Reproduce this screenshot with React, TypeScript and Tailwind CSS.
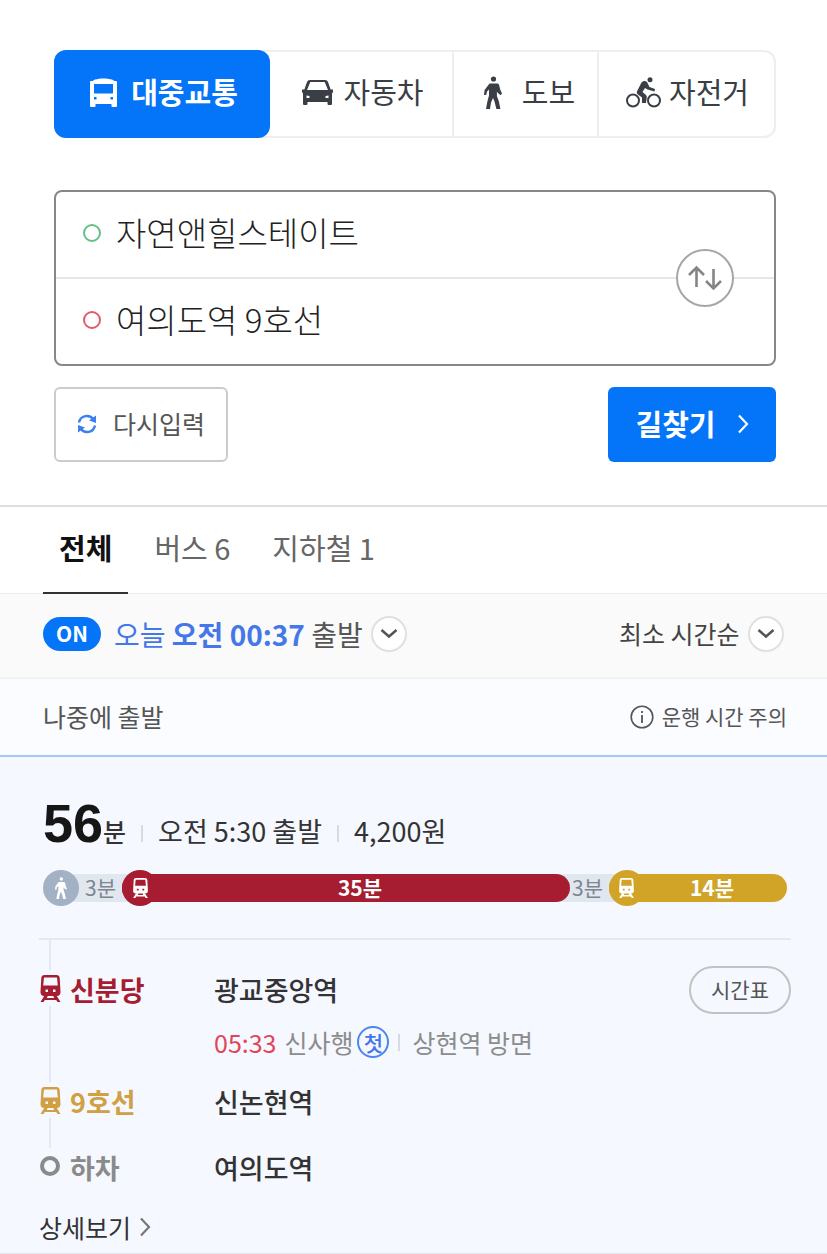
import type { FormEvent, ReactElement, ReactNode } from "react";
import { useState } from "react";

type TravelMode = "transit" | "car" | "walk" | "bike";
type RouteFilter = "all" | "bus" | "subway";

interface ModeOption {
  id: TravelMode;
  label: string;
  icon: ReactNode;
  spacing: string;
}

interface BarSegment {
  id: string;
  minutes: number;
  width: number;
  icon: ReactNode;
  bar: string;
  badge: string;
}

interface RouteStep {
  id: string;
  line: string;
  station: string;
  color: string;
  icon: ReactNode;
}

const modes: ModeOption[] = [
  { id: "transit", label: "대중교통", icon: <BusIcon />, spacing: "gap-[14px] pl-1" },
  { id: "car", label: "자동차", icon: <CarIcon />, spacing: "gap-[10px] pl-1" },
  {
    id: "walk",
    label: "도보",
    icon: <WalkIcon className="h-[33px] w-[18px]" />,
    spacing: "gap-5 pl-2",
  },
  { id: "bike", label: "자전거", icon: <BikeIcon />, spacing: "gap-2" },
];

const filters: { id: RouteFilter; label: string }[] = [
  { id: "all", label: "전체" },
  { id: "bus", label: "버스 6" },
  { id: "subway", label: "지하철 1" },
];

const segments: BarSegment[] = [
  {
    id: "walk",
    minutes: 3,
    width: 79,
    icon: <WalkIcon className="h-[22px] w-[14px]" />,
    bar: "text-[#7d8590]",
    badge: "bg-[#a3b1c4]",
  },
  {
    id: "sinbundang",
    minutes: 35,
    width: 448,
    icon: <TrainIcon className="h-[20px] w-[17px]" />,
    bar: "rounded-full bg-[#a61c30] pr-2 font-bold text-white",
    badge: "bg-[#a61c30]",
  },
  {
    id: "transfer",
    minutes: 3,
    width: 39,
    icon: null,
    bar: "pr-1 text-[#7d8590]",
    badge: "",
  },
  {
    id: "line9",
    minutes: 14,
    width: 178,
    icon: <TrainIcon className="h-[20px] w-[17px]" />,
    bar: "rounded-full bg-[#d1a427] pr-2 font-bold text-white",
    badge: "bg-[#d1a427]",
  },
];

const steps: RouteStep[] = [
  {
    id: "sinbundang",
    line: "신분당",
    station: "광교중앙역",
    color: "text-[#a61c30]",
    icon: <TrainIcon className="h-[27px] w-[21px]" />,
  },
  {
    id: "line9",
    line: "9호선",
    station: "신논현역",
    color: "text-[#d1a044]",
    icon: <TrainIcon className="h-[27px] w-[21px]" />,
  },
  {
    id: "exit",
    line: "하차",
    station: "여의도역",
    color: "text-[#8a8a8a]",
    icon: <span className="size-[20px] rounded-full border-4 border-current" />,
  },
];

export default function App(): ReactElement {
  return (
    <main className="bg-white font-['Noto_Sans_CJK_KR','Noto_Sans_CJK_SC',sans-serif] text-[#333]">
      <SearchPanel />
      <FilterTabs />
      <DepartureBar />
      <div className="flex h-[78px] items-center justify-between border-b-2 border-[#a9c6f4] bg-[#fafcff] pr-10 pl-[43px] text-[#555]">
        <h2 className="text-[25px]">나중에 출발</h2>
        <p className="flex items-center gap-2 text-[21px]">
          <InfoIcon />
          운행 시간 주의
        </p>
      </div>
      <RouteCard />
    </main>
  );
}

function SearchPanel(): ReactElement {
  const [mode, setMode] = useState<TravelMode>("transit");
  const [origin, setOrigin] = useState("자연앤힐스테이트");
  const [destination, setDestination] = useState("여의도역 9호선");

  function handleSubmit(event: FormEvent<HTMLFormElement>): void {
    event.preventDefault();
  }

  function handleSwap(): void {
    setOrigin(destination);
    setDestination(origin);
  }

  function handleReset(): void {
    setOrigin("");
    setDestination("");
  }

  return (
    <section className="border-b-2 border-[#dedede] pt-[50px] pr-[51px] pb-[43px] pl-[54px]">
      <nav className="grid h-[88px] grid-cols-[216fr_182fr_145fr_179fr] rounded-xl shadow-[inset_0_0_0_2px_#eee]">
        {modes.map((item, index) => {
          const active = item.id === mode;
          return (
            <button
              aria-pressed={active}
              className={`flex items-center justify-center pb-1 text-[29px] ${item.spacing} ${active ? "rounded-xl bg-[#0475f8] font-bold text-white" : "text-[#3a3f45]"} ${index > 1 && !active ? "border-l-2 border-[#eee]" : ""}`}
              key={item.id}
              onClick={() => {
                setMode(item.id);
              }}
              type="button"
            >
              {item.icon}
              {item.label}
            </button>
          );
        })}
      </nav>

      <form className="mt-[52px]" onSubmit={handleSubmit}>
        <div className="relative rounded-lg border-2 border-[#878787]">
          <PlaceField
            id="origin"
            label="출발지"
            onChange={setOrigin}
            ring="border-[#62c088]"
            value={origin}
          />
          <div className="h-[2px] bg-[#e6e6e6]" />
          <PlaceField
            id="destination"
            label="도착지"
            onChange={setDestination}
            ring="border-[#e5596b]"
            value={destination}
          />
          <button
            aria-label="출발지와 도착지 바꾸기"
            className="absolute inset-y-0 right-10 my-auto flex size-[58px] items-center justify-center rounded-full border-2 border-[#a6a6a6] bg-white text-[#858585]"
            onClick={handleSwap}
            type="button"
          >
            <SwapIcon />
          </button>
        </div>

        <div className="mt-[21px] flex justify-between">
          <button
            className="flex h-[75px] w-[174px] items-center justify-center gap-4 rounded-md border-2 border-[#ccc] pb-[2px] text-[25px] text-[#555]"
            onClick={handleReset}
            type="button"
          >
            <RefreshIcon />
            다시입력
          </button>
          <button
            className="flex h-[75px] w-[168px] items-center justify-center gap-[21px] rounded-md bg-[#0475f8] pb-[2px] text-[29px] font-bold text-white"
            type="submit"
          >
            길찾기
            <ChevronRight className="h-[20px] w-[12px]" />
          </button>
        </div>
      </form>
    </section>
  );
}

interface PlaceFieldProps {
  id: string;
  label: string;
  ring: string;
  value: string;
  onChange: (value: string) => void;
}

function PlaceField({ id, label, ring, value, onChange }: PlaceFieldProps): ReactElement {
  return (
    <label className="flex h-[85px] items-center gap-[15px] pr-[110px] pb-1 pl-[27px]" htmlFor={id}>
      <span className={`size-[18px] shrink-0 rounded-full border-2 ${ring}`} />
      <input
        aria-label={label}
        className="min-w-0 flex-1 bg-transparent text-[33px] font-light text-[#222] outline-none"
        id={id}
        onChange={(event) => {
          onChange(event.target.value);
        }}
        type="text"
        value={value}
      />
    </label>
  );
}

function FilterTabs(): ReactElement {
  const [filter, setFilter] = useState<RouteFilter>("all");

  return (
    <nav className="flex h-[87px] gap-[10px] border-b border-[#ececec] px-[43px]">
      {filters.map((item) => {
        const active = item.id === filter;
        return (
          <button
            aria-pressed={active}
            className={`-mb-px border-b-2 px-4 pb-1 text-[29px] ${active ? "border-[#333] font-bold text-[#111]" : "border-transparent text-[#666]"}`}
            key={item.id}
            onClick={() => {
              setFilter(item.id);
            }}
            type="button"
          >
            {item.label}
          </button>
        );
      })}
    </nav>
  );
}

function DepartureBar(): ReactElement {
  return (
    <div className="flex h-[85px] items-center justify-between border-b-2 border-[#f2f2f2] bg-[#fafafa] pr-[43px] pb-1 pl-[43px]">
      <div className="flex items-center gap-[13px]">
        <span className="flex h-[34px] w-[58px] items-center justify-center rounded-full bg-[#0475f8] text-[21px] font-bold text-white">
          ON
        </span>
        <button aria-haspopup="dialog" className="flex items-center gap-2 text-[28px]" type="button">
          <span className="text-[#555]">
            <span className="text-[#4477e8]">
              오늘 <b className="font-bold">오전 00:37</b>
            </span>{" "}
            출발
          </span>
          <ChevronBadge />
        </button>
      </div>
      <div className="flex items-center gap-2">
        <select
          aria-label="정렬"
          className="appearance-none bg-transparent text-[25px] text-[#444] outline-none"
          defaultValue="time"
        >
          <option value="time">최소 시간순</option>
          <option value="walk">최소 도보순</option>
        </select>
        <ChevronBadge />
      </div>
    </div>
  );
}

function RouteCard(): ReactElement {
  return (
    <article className="border-b-2 border-[#dfe3ea] bg-[#f5f8ff] pr-9 pb-2 pl-[39px]">
      <div className="flex h-[113px] items-end px-1 pb-[19px] text-[27px] leading-[40px]">
        <p className="flex items-baseline text-[25px] font-medium text-[#333]">
          <strong className="font-['Liberation_Sans',sans-serif] text-[54px] font-bold text-[#161616]">
            56
          </strong>
          분
        </p>
        <Divider className="mx-[15px] mb-[9px]" />
        <p>오전 5:30 출발</p>
        <Divider className="mx-[15px] mb-[9px]" />
        <p>4,200원</p>
      </div>

      <DurationBar />

      <ol className="mt-[32px] border-t-2 border-[#e3e9f4]">
        {steps.map((step, index) => (
          <li className="flex items-stretch" key={step.id}>
            <div className={`flex w-[22px] flex-col items-center ${step.color}`}>
              {index === 0 ? <span className="mb-[2px] h-[30px] w-[2px] bg-[#e3e9f4]" /> : null}
              <span className="flex h-[32px] items-center">{step.icon}</span>
              {index < steps.length - 1 ? (
                <span className="my-[2px] w-[2px] flex-1 bg-[#e3e9f4]" />
              ) : null}
            </div>
            <div className={`flex flex-1 items-start ${index === 0 ? "pt-[32px]" : ""}`}>
              <p
                className={`w-[153px] pl-[9px] text-[27px] leading-[36px] font-bold ${step.color}`}
              >
                {step.line}
              </p>
              <div className={`flex-1 ${index === 0 ? "pb-6" : "pb-[30px]"}`}>
                <div className="flex justify-between">
                  <p className="text-[27px] leading-[36px] font-medium">{step.station}</p>
                  {index === 0 ? (
                    <button
                      className="-my-[6px] h-[48px] w-[102px] rounded-full border-2 border-[#c2c2c2] text-[21px] text-[#555]"
                      type="button"
                    >
                      시간표
                    </button>
                  ) : null}
                </div>
                {index === 0 ? <NextTrain /> : null}
              </div>
            </div>
          </li>
        ))}
      </ol>

      <a className="mt-[-7px] flex w-fit items-center gap-2 text-[25px] leading-[36px]" href="#detail">
        상세보기
        <ChevronRight className="h-[20px] w-[12px] text-[#777]" />
      </a>
    </article>
  );
}

function NextTrain(): ReactElement {
  return (
    <p className="mt-4 flex items-center text-[25px] leading-[36px] text-[#8c8c8c]">
      <span className="text-[#e0465a]">05:33</span>
      <span className="ml-2">신사행</span>
      <span className="ml-1 flex size-[32px] items-center justify-center rounded-full border-2 border-[#4a86f0] text-[21px] font-medium text-[#3f74ec]">
        첫
      </span>
      <Divider className="mr-[12px] ml-[9px]" />
      <span>상현역 방면</span>
    </p>
  );
}

function DurationBar(): ReactElement {
  return (
    <div className="mx-1 flex h-[36px] items-center bg-[linear-gradient(#e1e7ef,#e1e7ef)] bg-[length:calc(100%-40px)_28px] bg-center bg-no-repeat">
      {segments.map((segment) => (
        <div
          className={`flex h-[28px] items-center text-[21px] ${segment.bar}`}
          key={segment.id}
          style={{ width: `${(segment.width / 744) * 100}%` }}
        >
          {segment.icon ? (
            <span
              className={`flex size-[36px] shrink-0 items-center justify-center rounded-full text-white ${segment.badge}`}
            >
              {segment.icon}
            </span>
          ) : null}
          <span className="flex-1 text-center">{segment.minutes}분</span>
        </div>
      ))}
    </div>
  );
}

function Divider({ className }: { className: string }): ReactElement {
  return <span className={`h-[17px] w-[2px] bg-[#d5dae3] ${className}`} />;
}

function ChevronBadge(): ReactElement {
  return (
    <span className="pointer-events-none flex size-[36px] items-center justify-center rounded-full border-2 border-[#e0e0e0] bg-white text-[#555]">
      <svg className="h-[11px] w-[18px]" fill="none" viewBox="0 0 18 11">
        <path d="M1.500 2L9 8.500 16.500 2" stroke="currentColor" strokeWidth="2.500" />
      </svg>
    </span>
  );
}

function ChevronRight({ className }: { className: string }): ReactElement {
  return (
    <svg className={className} fill="none" viewBox="0 0 12 20">
      <path d="M2 1.5l8 8.5-8 8.5" stroke="currentColor" strokeWidth="2.2" />
    </svg>
  );
}

function SwapIcon(): ReactElement {
  return (
    <svg className="h-[26px] w-[36px]" fill="none" viewBox="0 0 36 26">
      <path d="M9.5 22V3M2 10l7.5-7.5L17 10" stroke="currentColor" strokeWidth="2.6" />
      <path d="M26.5 4v19M19 16l7.5 7.5L34 16" stroke="currentColor" strokeWidth="2.6" />
    </svg>
  );
}

function RefreshIcon(): ReactElement {
  return (
    <svg className="size-[20px] text-[#3b7ff0]" fill="none" viewBox="0 0 20 20">
      <path
        d="M2 8.5A8 8 0 0 1 16.5 5.5M18 11.5A8 8 0 0 1 3.5 14.5"
        stroke="currentColor"
        strokeWidth="2.4"
      />
      <path d="M19 1.5V9l-7-2.5zM1 18.5V11l7 2.5z" fill="currentColor" />
    </svg>
  );
}

function InfoIcon(): ReactElement {
  return (
    <svg className="size-[24px] text-[#555]" fill="none" viewBox="0 0 24 24">
      <circle cx="12" cy="12" r="10.8" stroke="currentColor" strokeWidth="1.6" />
      <path d="M12 10v8M12 6v2" stroke="currentColor" strokeWidth="1.8" />
    </svg>
  );
}

function BusIcon(): ReactElement {
  return (
    <svg className="h-[29px] w-[27px]" fill="currentColor" viewBox="0 0 27 29">
      <path
        clipRule="evenodd"
        d="M5 1.6C10 0 17 0 22 1.6L24.5 3H26a1 1 0 0 1 1 1v24a1 1 0 0 1-1 1h-3.5a1 1 0 0 1-1-1v-2h-16v2a1 1 0 0 1-1 1H1a1 1 0 0 1-1-1V4a1 1 0 0 1 1-1h1.500zM4 6v9.500h19V6zM4 19v2.500h2.500V19zm16.500 0v2.500H23V19z"
        fillRule="evenodd"
      />
    </svg>
  );
}

function CarIcon(): ReactElement {
  return (
    <svg className="h-[25px] w-[31px]" fill="currentColor" viewBox="0 0 31 25">
      <path
        clipRule="evenodd"
        d="M8 0h15c1.500 0 2.500.7 3 2l2.600 7.500H31v3l-1 .5v10.500c0 1-.5 1.500-1.500 1.500H27c-1 0-1.500-.5-1.500-1.500V22h-20v1.500c0 1-.5 1.500-1.500 1.500H2.500C1.500 25 1 24.500 1 23.500V13l-1-.5v-3h2.400L5 2c.5-1.300 1.500-2 3-2zm.3 2L5 10h21l-3.300-8zM4.500 15.500v2.500h3v-2zm22 0l-3 .5v2h3z"
        fillRule="evenodd"
      />
    </svg>
  );
}

function WalkIcon({ className }: { className: string }): ReactElement {
  return (
    <svg className={className} fill="currentColor" viewBox="0 0 18 33">
      <circle cx="9.500" cy="3" r="2.600" />
      <path d="M5.500 7.500h7.500c1 0 1.600.4 2 1.300l1.300 5 1.700 3.700-1.500 1.700-3-2.700-.6-1v4.500l2 5.500 1.500 7.500h-4L10.500 25.500 9 22l-2 4.500-1 6.500H2l1.500-8 1.500-5.500V13.500l-2 2-.8 3.500H0l.6-5z" />
    </svg>
  );
}

function BikeIcon(): ReactElement {
  return (
    <svg className="h-[31px] w-[35px]" fill="none" viewBox="0 0 35 31">
      <circle cx="7" cy="23.500" r="6" stroke="currentColor" strokeWidth="2" />
      <circle cx="28" cy="23.500" r="6" stroke="currentColor" strokeWidth="2" />
      <circle cx="24" cy="2.800" r="2.500" fill="currentColor" />
      <path
        d="M15.500 5.500C17 4 19.500 3.500 21 5l2.500 5 5.500 2-.5 2.500-7-2-2.500-1.500-2.500 4 3.500 3c.6.6.8 1.200.8 2L20 26h-4v-5.500l-4-3c-1.300-1-1.600-2.200-.8-3.500z"
        fill="currentColor"
      />
    </svg>
  );
}

function TrainIcon({ className }: { className: string }): ReactElement {
  return (
    <svg className={className} fill="currentColor" viewBox="0 0 21 27">
      <path
        clipRule="evenodd"
        d="M4.500 0h12c2 0 3 1.200 3.200 3l.8 14c0 2.500-1.300 4-3.700 4H4.200c-2.400 0-3.700-1.500-3.700-4L1.300 3C1.500 1.200 2.500 0 4.500 0zM4 2.500l-.8 8h14.600l-.8-8zm1.500 12v2.500H8v-2.500zm7.500 0v2.500h2.500v-2.500z"
        fillRule="evenodd"
      />
      <path d="M4.500 20.500h3.500L6.800 23h7.400L13 20.500h3.500L20.500 27h-3l-1.300-2H4.800l-1.300 2h-3z" />
    </svg>
  );
}
